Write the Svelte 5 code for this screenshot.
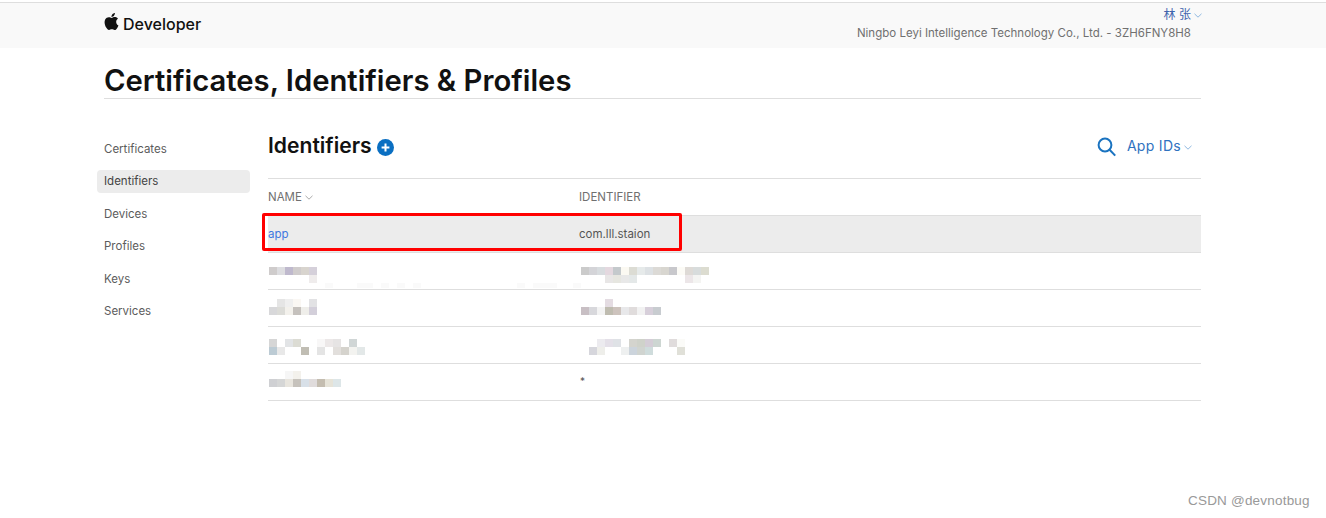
<script>
	const sideItems = ['Certificates', 'Identifiers', 'Devices', 'Profiles', 'Keys', 'Services'];

	// pixelated (mosaic) rows: null = no block
	const n = null;
	const f = '#fafafa';
	const blurred = [
		{
			top: 14,
			name: [
				['#cfcccc', '#dddde0', '#bfb9cd', '#d0cccc', '#d8d4ce', '#d5d0da'],
				[n, n, n, n, n, '#efecec'],
				[n, n, n, n, n, n, n, f, n, n, n, f, f, n, f, n, f, n, f, n, n, n, n, n, n, n, n, n, n, n, n, f, n, f, f, f, n, n, f]
			],
			id: [
				['#cbcbcb', '#d4d4d8', '#d8dcdf', '#e4d8df', '#c4c9cc', '#fbf9f2', '#dcdcd4', '#e6eaea', '#dde1e4', '#dcdad6', '#d8d6d0', '#c8c8cc', '#fcfbf6', '#dedad6', '#d8dcdc', '#dcdcd0'],
				[n, n, n, '#e8e6e6', '#e6e6e0', '#e8e8e8', '#e4e8e8', n, n, n, n, n, n, '#ece6e8', '#f4f4f2']
			]
		},
		{
			top: 9,
			name: [
				[n, '#e5e5e5', '#efefef', '#faf7f3', n, '#e2e2e4'],
				['#d8d8da', '#dcdcd8', '#f3f1ec', '#c5c1bd', '#efeeea', '#d3cfda']
			],
			id: [
				[n, n, n, '#e4dce2'],
				['#c8bfc4', '#d8d8dc', '#f3f3f3', '#bfbcb0', '#cdc3bd', '#e8e8ea', '#e0dcdc', '#f2f2f2', '#d7cfda', '#c8ccd0']
			]
		},
		{
			top: 12,
			name: [
				['#d6d6d6', n, '#e2e4e6', '#dcdcd4', n, n, '#f8f7f7', '#ece8e8', '#e6e4e4', n, '#d0d6d6'],
				['#bccbd4', '#e8e8e8', n, n, '#c0bdb3', n, '#e4e4e4', n, '#e2dfdc', '#d5d3cd', '#f3f3f0', '#e3e8e8']
			],
			id: [
				[n, n, '#ecebef', '#e4e0e8', '#dfe2e6', n, '#d4d4ce', '#cfd2ca', '#d4cdd6', '#cdd6d2', n, '#e0dcdc', '#fbfbf8'],
				[n, '#d6d6dc', '#eeeeea', n, n, '#eef0f0', '#ccd4dc', '#d0d4d0', '#cfdcdc', n, n, n, '#e0e0d8']
			]
		},
		{
			top: 7,
			name: [
				[n, n, '#f6f6f6', '#f3f1ec'],
				['#cfd0d3', '#d5d6d6', '#e8e5de', '#c6c2bc', '#d8e0e8', '#e0dcdc', '#c4bdb0', '#e6e3d8', '#dde6e8']
			],
			id: null
		}
	];
</script>

<div class="page">
	<header class="nav">
		<div class="wrap nav-inner">
			<a class="brand" href="#top">
				<svg class="apple" viewBox="0 0 24 24" width="17" height="17" aria-hidden="true">
					<path d="M12.152 6.896c-.948 0-2.415-1.078-3.96-1.04-2.04.027-3.91 1.183-4.961 3.014-2.117 3.675-.546 9.103 1.519 12.09 1.013 1.454 2.208 3.09 3.792 3.039 1.52-.065 2.09-.987 3.935-.987 1.831 0 2.35.987 3.96.948 1.637-.026 2.676-1.48 3.676-2.948 1.156-1.688 1.636-3.325 1.662-3.415-.039-.013-3.182-1.221-3.22-4.857-.026-3.04 2.48-4.494 2.597-4.559-1.429-2.09-3.623-2.324-4.39-2.376-2-.156-3.675 1.09-4.61 1.09zM15.53 3.83c.843-1.012 1.4-2.427 1.245-3.83-1.207.052-2.662.805-3.532 1.818-.78.896-1.454 2.338-1.273 3.714 1.338.104 2.715-.688 3.559-1.701" />
				</svg>
				<span>Developer</span>
			</a>
			<div class="account">
				<div class="user">林 张<svg class="chev" viewBox="0 0 8 5" width="8" height="5"><path d="M.5.8 4 4.2 7.5.8" /></svg></div>
				<div class="team">Ningbo Leyi Intelligence Technology Co., Ltd. - 3ZH6FNY8H8</div>
			</div>
		</div>
	</header>

	<div class="wrap">
		<h1>Certificates, Identifiers &amp; Profiles</h1>

		<div class="columns">
			<nav class="side">
				{#each sideItems as item}
					<a href="#top" class:active={item === 'Identifiers'}>{item}</a>
				{/each}
			</nav>

			<main>
				<div class="head">
					<h2>Identifiers</h2>
					<svg class="plus" viewBox="0 0 17 17" width="17" height="17" aria-hidden="true">
						<circle cx="8.5" cy="8.5" r="8.5" />
						<path d="M8.5 4.6v7.8M4.6 8.5h7.8" />
					</svg>
					<svg class="search" viewBox="0 0 20 20" width="20" height="20" aria-hidden="true">
						<circle cx="8" cy="8" r="6.4" />
						<path d="m12.6 12.8 5.6 5.8" />
					</svg>
					<span class="filter">App IDs<svg class="chev" viewBox="0 0 8 5" width="8" height="5"><path d="M.5.8 4 4.2 7.5.8" /></svg></span>
				</div>

				<div class="table">
					<div class="row labels">
						<div class="col-name">NAME<svg class="chev grey" viewBox="0 0 8 5" width="8" height="5"><path d="M.5.8 4 4.2 7.5.8" /></svg></div>
						<div class="col-id">IDENTIFIER</div>
					</div>
					<div class="row selected">
						<div class="col-name"><a href="#top">app</a></div>
						<div class="col-id">com.lll.staion</div>
					</div>
					{#each blurred as r}
						<div class="row blur-row">
							<div class="col-name">
								<div class="mosaic" style="margin-top: {r.top}px">
									{#each r.name as line}
										<div class="mosaic-line">
											{#each line as c}<i style="background: {c ?? 'transparent'}"></i>{/each}
										</div>
									{/each}
								</div>
							</div>
							<div class="col-id">
								{#if r.id}
									<div class="mosaic" style="margin-top: {r.top}px">
										{#each r.id as line}
											<div class="mosaic-line">
												{#each line as c}<i style="background: {c ?? 'transparent'}"></i>{/each}
											</div>
										{/each}
									</div>
								{:else}
									<span class="star">*</span>
								{/if}
							</div>
						</div>
					{/each}
					<div class="red-box"></div>
				</div>
			</main>
		</div>
	</div>

	<div class="watermark">CSDN @devnotbug</div>
</div>

<style>
	:global(body) {
		margin: 0;
		background: #fff;
	}

	.page {
		position: relative;
		height: 518px;
		overflow: hidden;
		padding-top: 2px;
		box-sizing: border-box;
		font-family: Inter, "Noto Sans CJK SC", sans-serif;
		color: #333;
	}

	.wrap {
		width: 1097px;
		margin-left: 104px;
	}

	a {
		text-decoration: none;
		color: inherit;
	}

	.nav {
		height: 46px;
		background: #f9f9f9;
		border-top: 1px solid #dedede;
		box-sizing: border-box;
	}

	.nav-inner {
		display: flex;
		justify-content: space-between;
	}

	.brand {
		display: flex;
		align-items: center;
		gap: 2px;
		height: 41px;
		font-size: 16px;
		font-weight: 500;
		color: #111;
	}

	.apple {
		fill: #111;
		margin-top: -5px;
		margin-left: -1px;
		margin-right: 1px;
	}

	.account {
		text-align: right;
		padding-right: 1px;
		padding-top: 3px;
		font-size: 11.5px;
	}

	.user {
		color: #3f64ad;
		font-size: 12px;
		line-height: 17px;
		margin-right: -2px;
	}

	.team {
		color: #707070;
		line-height: 17px;
		margin-right: 9px;
		margin-top: 2px;
		letter-spacing: 0.01px;
	}

	.chev {
		fill: none;
		stroke: #8fb8e0;
		stroke-width: 1;
		margin-left: 3px;
		vertical-align: 1px;
	}

	.chev.grey {
		stroke: #aaa;
	}

	h1 {
		margin: 0;
		padding-top: 15px;
		height: 51px;
		box-sizing: border-box;
		font-size: 29.25px;
		line-height: 35px;
		font-weight: 600;
		color: #111;
		border-bottom: 1px solid #dedede;
	}

	.columns {
		display: flex;
		padding-top: 32px;
	}

	.side {
		width: 164px;
		flex: none;
		display: flex;
		flex-direction: column;
		font-size: 11.5px;
		padding-top: 7px;
	}

	.side a {
		display: block;
		height: 23px;
		line-height: 23px;
		margin-bottom: 9.4px;
		margin-left: -7px;
		padding-left: 7px;
		width: 146px;
		border-radius: 4px;
		color: #5c5c5c;
	}

	.side a.active {
		background: #ececec;
		color: #444;
	}

	main {
		flex: 1;
	}

	.head {
		display: flex;
		align-items: center;
		height: 47px;
		padding-right: 9px;
		padding-bottom: 18px;
		box-sizing: border-box;
	}

	h2 {
		margin: 0;
		font-size: 21.1px;
		line-height: 30px;
		font-weight: 600;
		color: #111;
	}

	.plus {
		margin-left: 5px;
		margin-top: 3px;
	}

	.plus circle {
		fill: #0a6fc2;
	}

	.plus path {
		stroke: #fff;
		stroke-width: 2;
	}

	.search {
		margin-left: auto;
		margin-top: 2px;
		fill: none;
		stroke: #1a73c0;
		stroke-width: 2;
	}

	.filter {
		margin-left: 10px;
		color: #2f72c0;
		font-size: 14px;
		letter-spacing: 0.3px;
		margin-top: -1px;
	}

	.table {
		position: relative;
		border-top: 1px solid #dedede;
	}

	.row {
		display: flex;
		height: 37px;
		box-sizing: border-box;
		border-bottom: 1px solid #dedede;
		font-size: 11.5px;
	}

	.labels > div {
		line-height: 36px;
		color: #707070;
	}

	.selected {
		background: #ececec;
	}

	.selected > div {
		line-height: 36px;
		color: #555;
	}

	.selected a {
		color: #3f78e0;
	}

	.col-name {
		width: 311px;
		flex: none;
	}

	.col-id {
		flex: 1;
	}

	.blur-row .col-name {
		padding-left: 1px;
		box-sizing: border-box;
	}

	.blur-row .col-id {
		padding-left: 2px;
	}

	.mosaic-line {
		display: flex;
		height: 8px;
	}

	.mosaic-line i {
		display: block;
		width: 8px;
		height: 8px;
		flex: none;
	}

	.mosaic-line:nth-child(3) i {
		height: 5px;
	}

	.star {
		display: block;
		line-height: 34px;
		margin-left: -1px;
		color: #555;
		font-size: 10px;
	}

	.red-box {
		position: absolute;
		left: -6px;
		top: 34px;
		width: 420px;
		height: 38px;
		box-sizing: border-box;
		border: 3px solid #f00;
		border-radius: 2px;
	}

	.watermark {
		position: absolute;
		left: 1188px;
		top: 492px;
		font-family: "Liberation Sans", sans-serif;
		font-size: 13.5px;
		line-height: 17px;
		color: #999;
		letter-spacing: 0.2px;
	}
</style>
